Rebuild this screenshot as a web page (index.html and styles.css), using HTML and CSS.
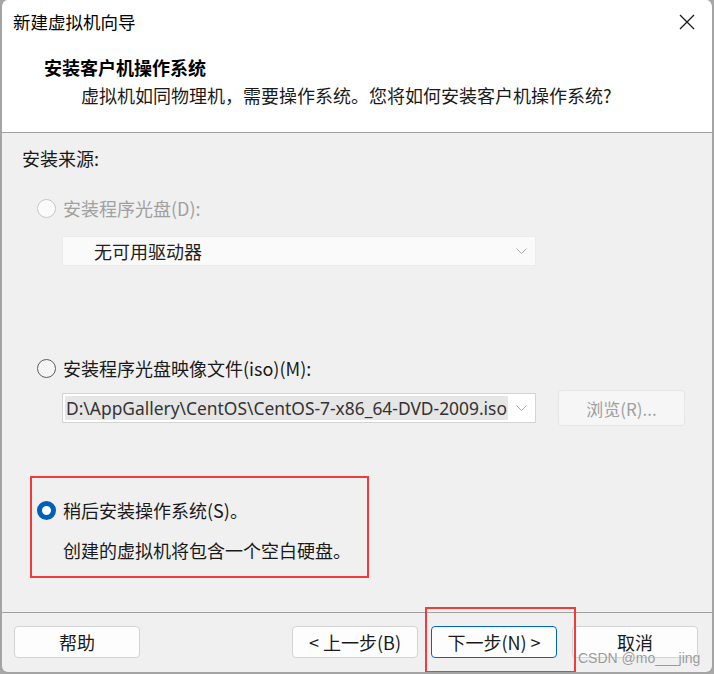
FILE: index.html
```html
<!DOCTYPE html>
<html lang="zh-CN">
<head>
<meta charset="utf-8">
<title>新建虚拟机向导</title>
<link rel="stylesheet" href="styles.css">
</head>
<body>
<div class="window">
  <div class="titlebar">
    <span class="title">新建虚拟机向导</span>
    <span class="close">
      <svg width="16" height="16" viewBox="0 0 16 16"><path d="M1 1 L15 15 M15 1 L1 15" stroke="#1a1a1a" stroke-width="1.3" fill="none"/></svg>
    </span>
  </div>
  <div class="header">
    <div class="heading">安装客户机操作系统</div>
    <div class="subtitle">虚拟机如同物理机，需要操作系统。您将如何安装客户机操作系统?</div>
  </div>
  <div class="content">
    <div class="label">安装来源:</div>

    <div class="radio-row row1 disabled">
      <span class="radio"></span>
      <span class="radio-text">安装程序光盘(D):</span>
    </div>
    <div class="combo combo-disabled">
      <span class="combo-text">无可用驱动器</span>
      <svg class="chev" width="11" height="7" viewBox="0 0 11 7"><path d="M0.5 0.5 L5.5 5.5 L10.5 0.5" stroke="#a8a8a8" stroke-width="1" fill="none"/></svg>
    </div>

    <div class="radio-row row2">
      <span class="radio"></span>
      <span class="radio-text">安装程序光盘映像文件(iso)(M):</span>
    </div>
    <div class="iso-row">
      <div class="combo combo-iso">
        <span class="iso-text">D:\AppGallery\CentOS\CentOS-7-x86_64-DVD-2009.iso</span>
        <svg class="chev" width="11" height="7" viewBox="0 0 11 7"><path d="M0.5 0.5 L5.5 5.5 L10.5 0.5" stroke="#a8a8a8" stroke-width="1" fill="none"/></svg>
      </div>
      <div class="browse">浏览(R)...</div>
    </div>

    <div class="later-box">
      <div class="radio-row row3">
        <span class="radio checked"></span>
        <span class="radio-text">稍后安装操作系统(S)。</span>
      </div>
      <div class="later-note">创建的虚拟机将包含一个空白硬盘。</div>
    </div>
  </div>
  <div class="footer">
    <button class="btn">帮助</button>
    <span class="spacer"></span>
    <button class="btn btn-back">&lt; 上一步(B)</button>
    <button class="btn btn-next">下一步(N) &gt;</button>
    <button class="btn btn-cancel">取消</button>
  </div>
  <div class="highlight"></div>
  <div class="watermark">CSDN @mo___jing</div>
</div>
</body>
</html>
```

FILE: styles.css
```css
* { box-sizing: border-box; }
html, body {
  margin: 0;
  padding: 0;
}
body {
  width: 714px;
  height: 674px;
  background: #a8a8a8;
  font-family: "Noto Sans CJK SC", "Noto Sans", sans-serif;
  color: #1a1a1a;
  overflow: hidden;
}
.window {
  position: relative;
  width: 714px;
  height: 674px;
  border: 2px solid #a4a4a4;
  border-top-width: 0;
  border-radius: 8px;
  background: #f0f0f0;
  overflow: hidden;
  display: flex;
  flex-direction: column;
}
.titlebar {
  height: 44px;
  background: #fff;
  display: flex;
  align-items: center;
  justify-content: space-between;
  padding: 0 17px 0 11px;
}
.title {
  font-size: 17.5px;
  line-height: 24px;
  color: #000;
}
.close {
  display: flex;
  width: 16px;
  height: 16px;
}
.header {
  height: 89px;
  background: #fff;
  border-bottom: 1px solid #a0a0a0;
  padding-top: 11px;
}
.heading {
  font-size: 18px;
  font-weight: 700;
  line-height: 24px;
  padding-left: 42px;
  color: #000;
}
.subtitle {
  font-size: 18px;
  line-height: 24px;
  padding-left: 79px;
  margin-top: 4px;
  color: #1a1a1a;
}
.content {
  height: 480px;
  padding: 13px 0 0 20px;
  border-bottom: 1px solid #a0a0a0;
  display: flex;
  flex-direction: column;
  align-items: flex-start;
}
.label {
  font-size: 18px;
  line-height: 24px;
  color: #1a1a1a;
}
.radio-row {
  display: flex;
  align-items: center;
  height: 24px;
  padding-left: 15px;
}
.row1 { margin-top: 26px; }
.row2 { margin-top: 90px; }
.radio {
  width: 19px;
  height: 19px;
  border-radius: 50%;
  border: 1.5px solid #5c5c5c;
  background: #f5f5f5;
  flex: none;
}
.disabled .radio {
  border-color: #c6c6c6;
  background: #fbfbfb;
}
.radio.checked {
  border: 5px solid #005fb8;
  background: #fff;
}
.radio-text {
  font-size: 18px;
  line-height: 24px;
  margin-left: 7px;
  color: #1a1a1a;
}
.disabled .radio-text { color: #a0a0a0; }
.combo {
  display: flex;
  align-items: center;
  justify-content: space-between;
  height: 30px;
  width: 474px;
}
.combo-disabled {
  margin: 16px 0 0 40px;
  background: #fafafa;
  border: 1px solid #ececec;
  padding: 0 8px 0 31px;
}
.combo-text {
  font-size: 18px;
  line-height: 24px;
  color: #222;
}
.chev { flex: none; }
.iso-row {
  display: flex;
  align-items: center;
  margin: 10px 0 0 40px;
  height: 36px;
}
.combo-iso {
  background: #fff;
  border: 1px solid #d4d4d4;
  padding: 0 8px 0 2px;
}
.iso-text {
  font-family: "Noto Sans", "Open Sans", sans-serif;
  font-size: 17.4px;
  line-height: 24px;
  color: #333;
  background: #e6e6e6;
  padding: 0 1px;
  white-space: nowrap;
}
.browse {
  margin-left: 22px;
  width: 127px;
  height: 36px;
  border: 1px solid #e6e6e6;
  border-radius: 4px;
  background: #f6f6f6;
  color: #a0a0a0;
  font-size: 17px;
  display: flex;
  align-items: center;
  justify-content: center;
}
.later-box {
  margin: 50px 0 0 8px;
  width: 339px;
  height: 102px;
  border: 2px solid #f23b3b;
  padding: 20px 0 0 5px;
}
.later-box .radio-row { padding-left: 0; }
.later-note {
  font-size: 18px;
  line-height: 24px;
  margin: 16px 0 0 26px;
  color: #1a1a1a;
}
.footer {
  flex: 1;
  display: flex;
  align-items: flex-start;
  padding: 13px 14px 0 12px;
}
.spacer { flex: 1; }
.btn {
  width: 126px;
  height: 32px;
  background: #fdfdfd;
  border: 1px solid #d3d3d3;
  border-radius: 4px;
  font-family: "Noto Sans CJK SC", "Noto Sans", sans-serif;
  font-size: 18px;
  line-height: 22px;
  color: #1a1a1a;
  padding: 0;
}
.btn-next {
  margin-left: 13px;
  border-color: #0067c0;
}
.btn-cancel { margin-left: 15px; }
.highlight {
  position: absolute;
  left: 423px;
  top: 607px;
  width: 151px;
  height: 66px;
  border: 2px solid #f23b3b;
  pointer-events: none;
}
.watermark {
  position: absolute;
  left: 576px;
  top: 650px;
  font-family: "Liberation Sans", Arial, sans-serif;
  font-size: 14px;
  line-height: 16px;
  color: #9a9a9a;
  text-shadow: 0 0 1px #fff;
  white-space: nowrap;
}
```
